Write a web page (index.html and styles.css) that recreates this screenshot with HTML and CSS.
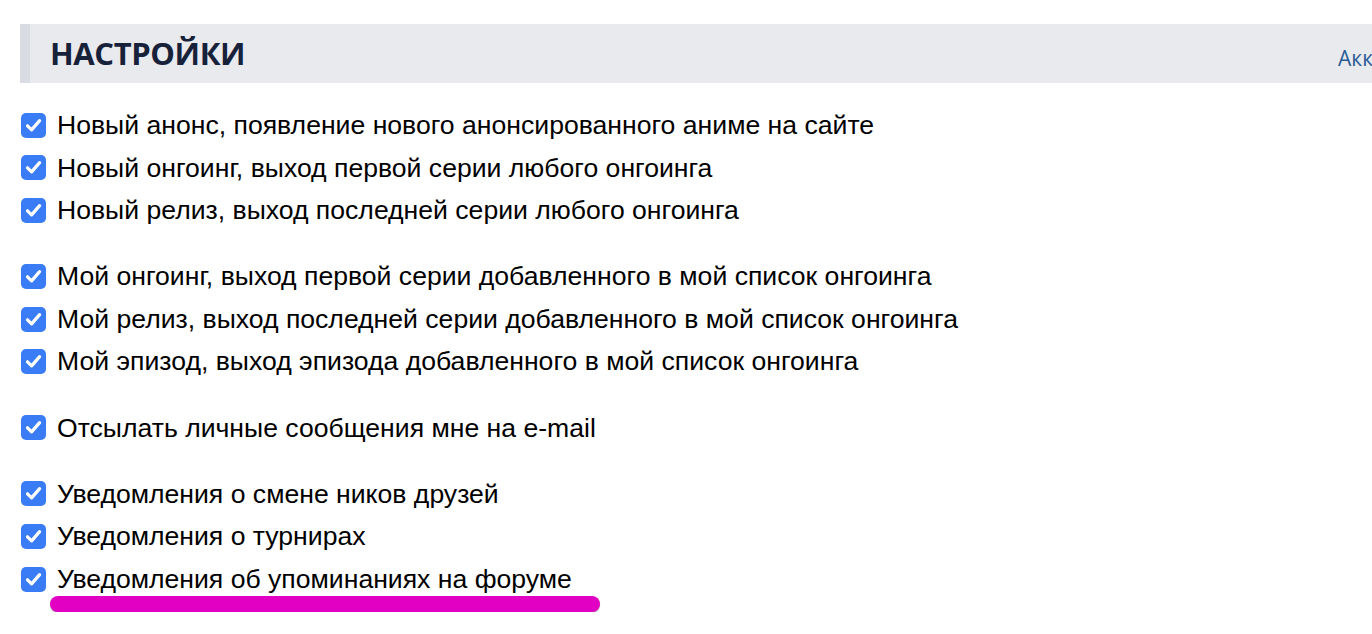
FILE: index.html
```html
<!DOCTYPE html>
<html lang="ru">
<head>
<meta charset="utf-8">
<title>Настройки</title>
<link rel="stylesheet" href="styles.css">
</head>
<body>
<div class="page">
  <div class="header">
    <h1 class="title">НАСТРОЙКИ</h1>
    <a class="tab" href="#">Аккаунт</a>
  </div>
  <div class="settings">
    <div class="group">
      <label class="row"><span class="box"><svg viewBox="0 0 25 25" width="25" height="25"><path d="M6.5 12.8 L10.6 16.9 L18.6 7.6" fill="none" stroke="#fff" stroke-width="3.2" stroke-linecap="round" stroke-linejoin="round"/></svg></span><span class="label">Новый анонс, появление нового анонсированного аниме на сайте</span></label>
      <label class="row"><span class="box"><svg viewBox="0 0 25 25" width="25" height="25"><path d="M6.5 12.8 L10.6 16.9 L18.6 7.6" fill="none" stroke="#fff" stroke-width="3.2" stroke-linecap="round" stroke-linejoin="round"/></svg></span><span class="label">Новый онгоинг, выход первой серии любого онгоинга</span></label>
      <label class="row"><span class="box"><svg viewBox="0 0 25 25" width="25" height="25"><path d="M6.5 12.8 L10.6 16.9 L18.6 7.6" fill="none" stroke="#fff" stroke-width="3.2" stroke-linecap="round" stroke-linejoin="round"/></svg></span><span class="label">Новый релиз, выход последней серии любого онгоинга</span></label>
    </div>
    <div class="group">
      <label class="row"><span class="box"><svg viewBox="0 0 25 25" width="25" height="25"><path d="M6.5 12.8 L10.6 16.9 L18.6 7.6" fill="none" stroke="#fff" stroke-width="3.2" stroke-linecap="round" stroke-linejoin="round"/></svg></span><span class="label">Мой онгоинг, выход первой серии добавленного в мой список онгоинга</span></label>
      <label class="row"><span class="box"><svg viewBox="0 0 25 25" width="25" height="25"><path d="M6.5 12.8 L10.6 16.9 L18.6 7.6" fill="none" stroke="#fff" stroke-width="3.2" stroke-linecap="round" stroke-linejoin="round"/></svg></span><span class="label">Мой релиз, выход последней серии добавленного в мой список онгоинга</span></label>
      <label class="row"><span class="box"><svg viewBox="0 0 25 25" width="25" height="25"><path d="M6.5 12.8 L10.6 16.9 L18.6 7.6" fill="none" stroke="#fff" stroke-width="3.2" stroke-linecap="round" stroke-linejoin="round"/></svg></span><span class="label">Мой эпизод, выход эпизода добавленного в мой список онгоинга</span></label>
    </div>
    <div class="group">
      <label class="row"><span class="box"><svg viewBox="0 0 25 25" width="25" height="25"><path d="M6.5 12.8 L10.6 16.9 L18.6 7.6" fill="none" stroke="#fff" stroke-width="3.2" stroke-linecap="round" stroke-linejoin="round"/></svg></span><span class="label">Отсылать личные сообщения мне на e-mail</span></label>
    </div>
    <div class="group">
      <label class="row"><span class="box"><svg viewBox="0 0 25 25" width="25" height="25"><path d="M6.5 12.8 L10.6 16.9 L18.6 7.6" fill="none" stroke="#fff" stroke-width="3.2" stroke-linecap="round" stroke-linejoin="round"/></svg></span><span class="label">Уведомления о смене ников друзей</span></label>
      <label class="row"><span class="box"><svg viewBox="0 0 25 25" width="25" height="25"><path d="M6.5 12.8 L10.6 16.9 L18.6 7.6" fill="none" stroke="#fff" stroke-width="3.2" stroke-linecap="round" stroke-linejoin="round"/></svg></span><span class="label">Уведомления о турнирах</span></label>
      <label class="row"><span class="box"><svg viewBox="0 0 25 25" width="25" height="25"><path d="M6.5 12.8 L10.6 16.9 L18.6 7.6" fill="none" stroke="#fff" stroke-width="3.2" stroke-linecap="round" stroke-linejoin="round"/></svg></span><span class="label">Уведомления об упоминаниях на форуме</span></label>
    </div>
    <div class="highlight"></div>
  </div>
</div>
</body>
</html>
```

FILE: styles.css
```css
html, body {
  margin: 0;
  padding: 0;
  background: #ffffff;
  overflow: hidden;
}

.page {
  padding: 24px 0 0 20px;
  font-family: "Liberation Sans", Arial, sans-serif;
  color: #000;
}

.header {
  display: grid;
  grid-template-columns: 1288px max-content;
  align-items: center;
  width: 1440px;
  height: 59px;
  box-sizing: border-box;
  padding-left: 20px;
  background: #e9eaee;
  border-left: 10px solid #d9dce3;
  overflow: hidden;
}

.title {
  margin: 0;
  font-family: "Open Sans", "Noto Sans", sans-serif;
  font-weight: 700;
  font-size: 31px;
  letter-spacing: -0.4px;
  color: #17223a;
  line-height: 1;
}

.tab {
  font-family: "Open Sans", "Noto Sans", sans-serif;
  font-size: 21px;
  color: #2b5b97;
  text-decoration: none;
  padding-top: 8px;
  white-space: nowrap;
}

.settings {
  padding-top: 21px;
}

.group {
  display: flex;
  flex-direction: column;
  margin-bottom: 23.5px;
}

.row {
  display: flex;
  align-items: center;
  height: 42.6px;
  gap: 11px;
  padding-left: 1px;
}

.box {
  display: flex;
  width: 25px;
  height: 25px;
  border-radius: 5px;
  background: #3a7bf6;
  flex: none;
}

.label {
  font-size: 26.6px;
  line-height: 1;
}

.highlight {
  width: 550px;
  height: 16px;
  margin: -28px 0 0 30px;
  border-radius: 8px;
  background: #e200c3;
  box-shadow: 0 1px 1px rgba(0, 0, 0, 0.35);
}
```
